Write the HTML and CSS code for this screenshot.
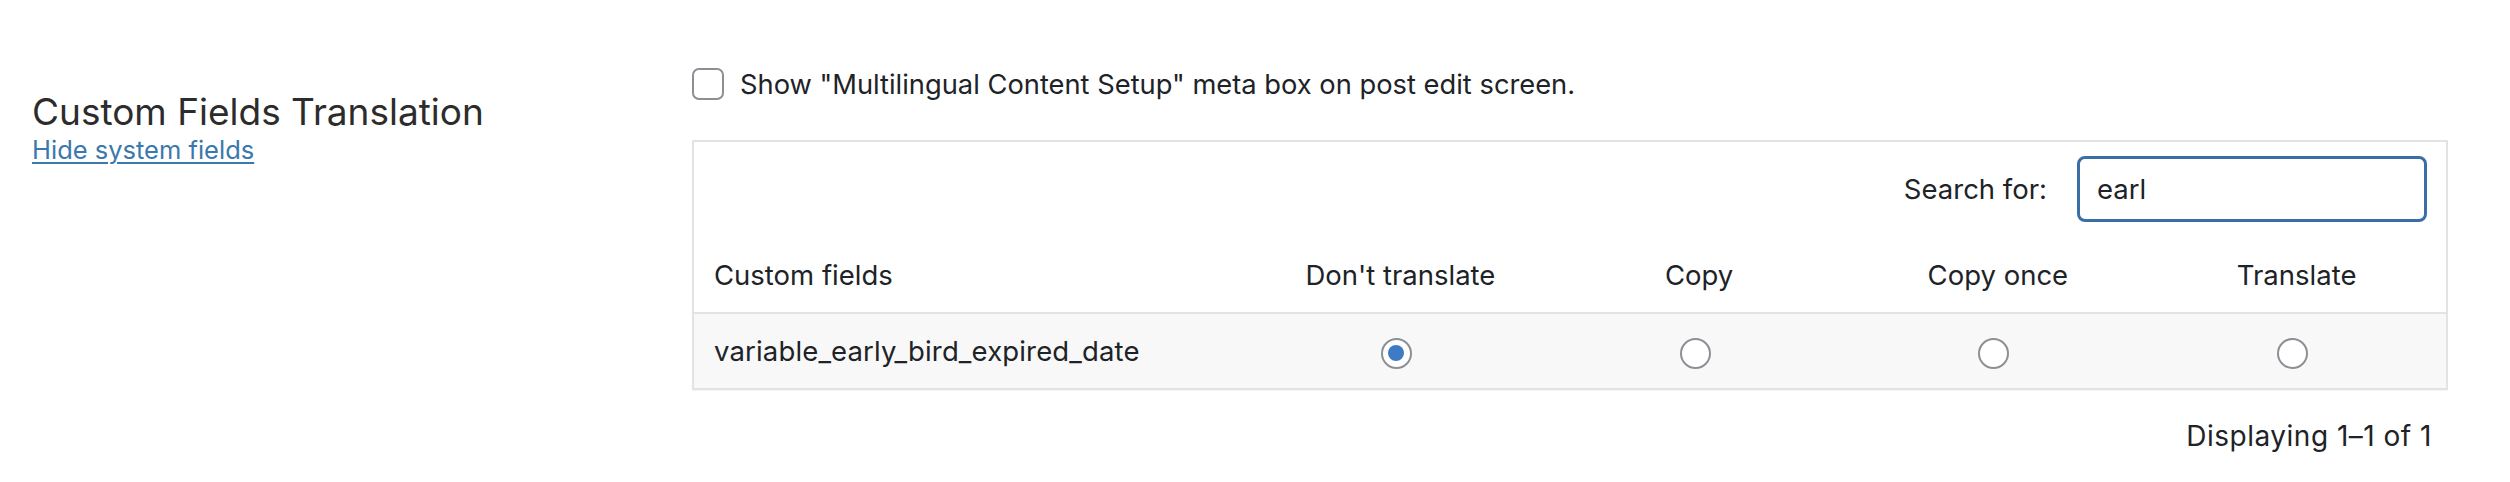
FILE: index.html
```html
<!DOCTYPE html>
<html lang="en">
<head>
<meta charset="utf-8">
<title>Custom Fields Translation</title>
<link rel="stylesheet" href="styles.css">
</head>
<body>
<div class="page">
  <div class="side">
    <h2 class="title">Custom Fields Translation</h2>
    <a class="toggle-link" href="#">Hide system fields</a>
  </div>
  <div class="main">
    <label class="check-row">
      <input type="checkbox" class="checkbox">
      <span>Show "Multilingual Content Setup" meta box on post edit screen.</span>
    </label>
    <div class="box">
      <div class="search-row">
        <span class="search-label">Search for:</span>
        <input type="text" class="search-input" value="earl">
      </div>
      <table class="fields">
        <thead>
          <tr>
            <th class="col-name">Custom fields</th>
            <th>Don't translate</th>
            <th>Copy</th>
            <th>Copy once</th>
            <th>Translate</th>
          </tr>
        </thead>
        <tbody>
          <tr>
            <td class="col-name">variable_early_bird_expired_date</td>
            <td><input type="radio" class="radio" name="f1" checked></td>
            <td><input type="radio" class="radio" name="f1"></td>
            <td><input type="radio" class="radio" name="f1"></td>
            <td><input type="radio" class="radio" name="f1"></td>
          </tr>
        </tbody>
      </table>
    </div>
    <div class="pager">Displaying 1–1 of 1</div>
  </div>
</div>
</body>
</html>
```

FILE: styles.css
```css
* { box-sizing: border-box; }

html, body {
  margin: 0;
  padding: 0;
  background: #ffffff;
}

body {
  font-family: Inter, "Liberation Sans", Arial, sans-serif;
  color: #1d2327;
}

.page {
  display: flex;
  padding: 0 62px 0 32px;
}

.side {
  width: 660px;
  flex: none;
  padding-top: 90px;
}

.title {
  margin: 0;
  font-size: 37px;
  line-height: 44px;
  font-weight: 400;
  color: #2c2c2c;
}

.toggle-link {
  display: inline-block;
  font-size: 25.5px;
  line-height: 32px;
  color: #3b78ab;
  text-decoration: underline;
  text-underline-offset: 3px;
  text-decoration-thickness: 2px;
}

.main {
  width: 1756px;
  flex: none;
  padding-top: 68px;
}

.check-row {
  display: flex;
  align-items: center;
  height: 32px;
  font-size: 27.3px;
  color: #1d2327;
}

.checkbox {
  appearance: none;
  -webkit-appearance: none;
  width: 32px;
  height: 32px;
  margin: 0 16px 0 0;
  border: 2px solid #8c8f94;
  border-radius: 7px;
  background: #fff;
  flex: none;
}

.box {
  margin-top: 40px;
  border: 2px solid #e3e3e3;
  background: #fff;
  box-shadow: 0 1px 1px rgba(0, 0, 0, 0.04);
}

.search-row {
  display: flex;
  justify-content: flex-end;
  align-items: center;
  gap: 30px;
  padding: 14px 19px 16px 0;
}

.search-label {
  font-size: 27.5px;
  color: #1d2327;
}

.search-input {
  width: 350px;
  height: 66px;
  border: 3px solid #3a6ea6;
  border-radius: 8px;
  padding: 0 17px;
  font-family: inherit;
  font-size: 27.5px;
  color: #1d2327;
  background: #fff;
  outline: none;
}

.fields {
  width: 100%;
  border-collapse: collapse;
  table-layout: fixed;
}

.fields th,
.fields td {
  height: 75px;
  padding: 0 20px;
  font-size: 27.5px;
  font-weight: 400;
  text-align: center;
  vertical-align: middle;
  color: #1d2327;
}

.fields th { border-bottom: 2px solid #e3e3e3; }

.fields .col-name {
  width: 557px;
  text-align: left;
}

.fields tbody td.col-name { letter-spacing: 0.15px; }

.fields tbody tr { background: #f8f8f8; }

.radio {
  appearance: none;
  -webkit-appearance: none;
  position: relative;
  width: 31px;
  height: 31px;
  margin: 0 8px 0 0;
  border: 2px solid #8c8f94;
  border-radius: 50%;
  background: #fff;
  vertical-align: middle;
}

.radio:checked::before {
  content: "";
  position: absolute;
  left: 50%;
  top: 50%;
  width: 16px;
  height: 16px;
  margin: -8px 0 0 -8px;
  border-radius: 50%;
  background: #3d7cc4;
}

.pager {
  margin-top: 28px;
  padding-right: 16px;
  text-align: right;
  font-size: 28px;
  letter-spacing: 0.5px;
  line-height: 36px;
  color: #1d2327;
}
```
